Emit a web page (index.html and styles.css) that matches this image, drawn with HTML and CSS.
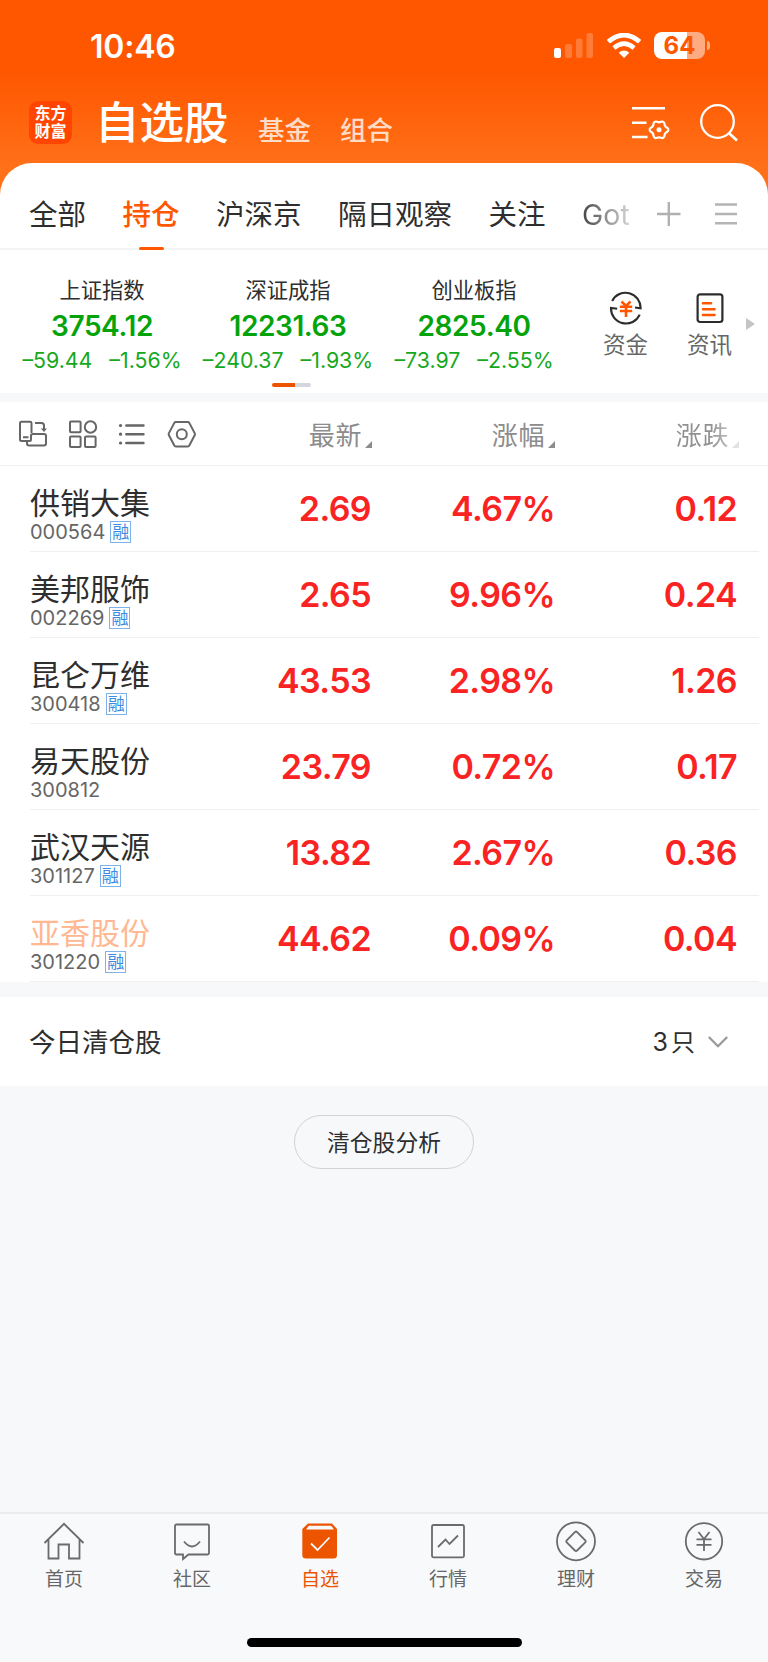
FILE: index.html
```html
<!DOCTYPE html>
<html lang="zh-CN">
<head>
<meta charset="utf-8">
<title>自选股</title>
<link rel="stylesheet" href="styles.css">
</head>
<body>
<div class="app">
  <header class="header">
    <div class="status">
      <span class="time">10:46</span>
      <div class="status-icons">
        <svg class="signal" width="40" height="26" viewBox="0 0 40 26" fill="#fff"><rect x="0" y="15" width="7" height="10" rx="2"/><g opacity=".22"><rect x="11" y="11" width="7" height="14" rx="2"/><rect x="22" y="5.500" width="6.500" height="19.500" rx="2"/><rect x="32.500" y="0" width="6.500" height="25" rx="2"/></g></svg>
        <svg class="wifi" width="34" height="26" viewBox="0 0 34 26" fill="none" stroke="#fff"><path d="M1.400 8.800Q17-4.600 32.600 8.800" stroke-width="4.800"/><path d="M6.900 14.900Q17 6.200 27.100 14.900" stroke-width="4.600"/><path d="M17 25L11.700 19.700Q17 15.300 22.300 19.700Z" fill="#fff" stroke="none"/></svg>
        <div class="battery"><span>64</span></div>
        <i class="battery-tip"></i>
      </div>
    </div>
    <div class="title-bar">
      <div class="logo"><span>东方</span><span>财富</span></div>
      <h1>自选股</h1>
      <span class="sub fund">基金</span>
      <span class="sub">组合</span>
      <svg class="ic-manage" width="40" height="36" viewBox="0 0 40 36" fill="none" stroke="#fff" stroke-width="2.600"><path d="M1 3.300H34M1 17.700H15.500M1 32H16.500"/><path d="M28 17.300C30 17.300 30.800 15.800 32.300 16.900C34.300 18.200 33 19.600 34.200 21.200C35.300 22.900 37.400 22.500 37.400 24.800C37.400 27.100 35.300 26.700 34.200 28.400C33 30 34.300 31.400 32.300 32.700C30.800 33.800 30 32.300 28 32.300C26 32.300 25.200 33.800 23.700 32.700C21.700 31.400 23 30 21.800 28.400C20.700 26.700 18.600 27.100 18.600 24.800C18.600 22.500 20.700 22.900 21.800 21.200C23 19.600 21.700 18.200 23.700 16.900C25.200 15.800 26 17.300 28 17.300Z" stroke-width="2.200" stroke-linejoin="round"/><circle cx="28" cy="24.800" r="2.500" fill="#fff" stroke="none"/></svg>
      <svg class="ic-search" width="40" height="40" viewBox="0 0 40 40" fill="none" stroke="#fff" stroke-width="2.300"><circle cx="18.500" cy="18.500" r="16.300"/><path d="M29.800 30L38 37.500" stroke-width="2.800"/></svg>
    </div>
  </header>

  <main class="sheet">
    <nav class="tabs">
      <span>全部</span><span class="on">持仓</span><span>沪深京</span><span>隔日观察</span><span>关注</span><span class="fade">Got</span>
      <svg class="ic-plus" width="24" height="24" viewBox="0 0 24 24" stroke="#b0b0b0" stroke-width="2.400"><path d="M0 12H23.500M11.800 0V24"/></svg>
      <svg class="ic-menu" width="22" height="24" viewBox="0 0 22 24" stroke="#b4b4b4" stroke-width="2.600"><path d="M0 2.500H22M0 12H22M0 21.300H22"/></svg>
    </nav>

    <section class="market">
      <div class="index"><h3>上证指数</h3><b>3754.12</b><p><span>–59.44</span><span>–1.56%</span></p></div>
      <div class="index"><h3>深证成指</h3><b>12231.63</b><p><span>–240.37</span><span>–1.93%</span></p><i class="pager"></i></div>
      <div class="index"><h3>创业板指</h3><b>2825.40</b><p><span>–73.97</span><span>–2.55%</span></p></div>
      <div class="link">
        <svg width="34" height="34" viewBox="0 0 34 34" fill="none" stroke="#2c2c2c" stroke-width="2.100"><path d="M3.200 10A15 15 0 0 1 31.600 17.300L26 16.500"/><path d="M30.700 23.600A15 15 0 0 1 2 16.900L8.200 17.700"/><path d="M12.500 10.500L17 15L21.500 10.500M10.800 15.800H23.200M10.800 20H23.200M17 15V26" stroke="#ff5600" stroke-width="2.600"/></svg>
        <span>资金</span>
      </div>
      <div class="link">
        <svg width="34" height="34" viewBox="0 0 34 34" fill="none" stroke="#2c2c2c" stroke-width="2.200"><rect x="4.600" y="3.400" width="24.800" height="27.600" rx="2.500"/><path d="M10 12.200H18M10 18.200H21.500M10 24H21.500" stroke="#ff5600" stroke-width="2.600" stroke-linecap="round"/></svg>
        <span>资讯</span>
      </div>
      <i class="more"></i>
    </section>

    <div class="columns">
      <div class="tools">
        <svg width="30" height="28" viewBox="0 0 30 28" fill="none" stroke="#666" stroke-width="2"><path d="M13.500 13V3Q13.500 1.800 12 1.800H3.500Q2 1.800 2 3.500V19.500Q2 21 3.500 21H11.500Q13 21 13 19.500V15.800Q13 14 15 14H26Q28 14 28 16V23.500Q28 25.500 26 25.500H11Q9 25.500 9 23.500V21M5 17.200H10.500M17 3H23.500Q26 3 26 5.500V10"/><path d="M22.800 8.500H29L26 12Z" fill="#666" stroke="none"/></svg>
        <svg width="30" height="28" viewBox="0 0 30 28" fill="none" stroke="#666" stroke-width="2"><rect x="2" y="1.600" width="10.600" height="10.600" rx="1"/><circle cx="22.500" cy="7" r="5.700"/><rect x="2" y="16.400" width="10.600" height="10.600" rx="1"/><rect x="17" y="16.400" width="10.600" height="10.600" rx="1"/></svg>
        <svg width="30" height="28" viewBox="0 0 30 28" fill="none" stroke="#666" stroke-width="2.400" stroke-linecap="round"><path d="M9.300 5.500H26.500M9.300 14.200H26.500M9.300 23H26.500"/><path d="M3.500 5.500h.1M3.500 14.200h.1M3.500 23h.1" stroke-width="3.200"/></svg>
        <svg width="30" height="28" viewBox="0 0 30 28" fill="none" stroke="#666" stroke-width="2" stroke-linejoin="round"><path d="M8.800 2H20.800Q21.800 2 22.300 2.900L27.800 13.400Q28.100 14.200 27.800 15L22.300 25.500Q21.800 26.400 20.800 26.400H8.800Q7.800 26.400 7.300 25.500L1.800 15Q1.500 14.200 1.800 13.400L7.300 2.900Q7.800 2 8.800 2Z"/><circle cx="14.800" cy="14.200" r="5"/></svg>
      </div>
      <span class="col">最新</span><span class="col">涨幅</span><span class="col dim">涨跌</span>
    </div>

    <section class="stocks">
      <div class="stock"><div class="name"><h4>供销大集</h4><p>000564<em>融</em></p></div><b>2.69</b><b>4.67%</b><b>0.12</b></div>
      <div class="stock"><div class="name"><h4>美邦服饰</h4><p>002269<em>融</em></p></div><b>2.65</b><b>9.96%</b><b>0.24</b></div>
      <div class="stock"><div class="name"><h4>昆仑万维</h4><p>300418<em>融</em></p></div><b>43.53</b><b>2.98%</b><b>1.26</b></div>
      <div class="stock"><div class="name"><h4>易天股份</h4><p>300812</p></div><b>23.79</b><b>0.72%</b><b>0.17</b></div>
      <div class="stock"><div class="name"><h4>武汉天源</h4><p>301127<em>融</em></p></div><b>13.82</b><b>2.67%</b><b>0.36</b></div>
      <div class="stock"><div class="name"><h4 class="faded">亚香股份</h4><p>301220<em>融</em></p></div><b>44.62</b><b>0.09%</b><b>0.04</b></div>
    </section>

    <section class="cleared">
      <span>今日清仓股</span>
      <span class="count"><i>3</i>只</span>
      <svg width="20" height="12" viewBox="0 0 20 12" fill="none" stroke="#999" stroke-width="2.300"><path d="M.8 1L10 10.200L19.200 1"/></svg>
    </section>
  </main>

  <div class="rest"><button class="analyse">清仓股分析</button></div>

  <nav class="tabbar">
    <div class="tab"><svg width="42" height="42" viewBox="0 0 42 42"><path d="M1.500 22L21 2.800L40.500 22M5.500 18.500V37.500H15.500V23.500H26V37.500H36.500V18.500"/></svg><span>首页</span></div>
    <div class="tab"><svg width="42" height="42" viewBox="0 0 42 42"><path d="M5.500 3.500H36.500Q38 3.500 38 5V32Q38 33.500 36.500 33.500H17.500L12 38V33.500H5.500Q4 33.500 4 32V5Q4 3.500 5.500 3.500Z"/><path d="M13 20.500Q21 30.500 29 20.500"/></svg><span>社区</span></div>
    <div class="tab on"><svg width="42" height="42" viewBox="0 0 42 42"><path d="M9 2.500H33L38 8V34Q38 37.500 34.500 37.500H7Q3.300 37.500 3.300 34V8Z" fill="#ec5400" stroke="none"/><path d="M9.800 4.800H32.200L35 8.500H7Z" fill="#f8f9fb" stroke="none"/><path d="M12 22.500L18.500 29L30.500 16.500" stroke="#f8f9fb"/></svg><span>自选</span></div>
    <div class="tab"><svg width="42" height="42" viewBox="0 0 42 42"><rect x="5" y="4" width="32" height="32.300" rx="1.500"/><path d="M11 26L18.500 18.500L22.500 23L31 14.500"/></svg><span>行情</span></div>
    <div class="tab"><svg width="42" height="42" viewBox="0 0 42 42"><circle cx="21" cy="20.300" r="19"/><path d="M19.900 11.100Q21 10 22.100 11.100L30.300 19.300Q31.300 20.300 30.300 21.300L22.100 29.500Q21 30.500 19.900 29.500L11.700 21.300Q10.700 20.300 11.700 19.300Z"/></svg><span>理财</span></div>
    <div class="tab"><svg width="42" height="42" viewBox="0 0 42 42"><circle cx="21" cy="20.300" r="18.200"/><path d="M15.500 11L21 18L26.500 11M13.500 18.300H28.500M13.500 23.800H28.500M21 18V30"/></svg><span>交易</span></div>
    <i class="home-bar"></i>
  </nav>
</div>
</body>
</html>
```
FILE: styles.css
```css
* { box-sizing: border-box; }
body { margin: 0; font-family: "Noto Sans CJK SC", sans-serif; color: #2e2e2e; }
h1, h3, h4, p { margin: 0; font-weight: 400; }
i, em { font-style: normal; }
svg { display: block; flex: none; }

.app {
  width: 768px; height: 1662px; overflow: hidden;
  display: flex; flex-direction: column;
  background: linear-gradient(#ff5600 0, #ff5600 70px, #ff7018 165px, #ff7018 220px, #f7f8fa 220px);
}
.header { height: 163px; flex: none; }
.status { height: 92px; padding: 0 58px 0 90px; display: flex; justify-content: space-between; align-items: center; color: #fff; }
.time { font: 600 32px/40px Inter, sans-serif; margin-top: 2px; letter-spacing: -.2px; }
.status-icons { display: flex; align-items: center; }
.wifi { margin: 0 13px 0 13px; }
.battery {
  width: 51px; height: 27px; border-radius: 8px;
  background: linear-gradient(90deg, #fff 33px, #ffab81 33px);
  font: 700 24px/27px Inter, sans-serif; color: #ff5600; text-align: center;
}
.battery, .battery-tip { margin-bottom: 1px; }
.battery-tip { width: 3px; height: 9px; margin-left: 2px; border-radius: 0 4px 4px 0; background: #ffab81; }

.title-bar { display: flex; height: 71px; padding-left: 29px; align-items: flex-start; color: #fff; }
.logo {
  width: 43px; height: 43px; margin: 9px 23px 0 0; padding-top: 2px; border-radius: 9px; background: #ff4500;
  display: flex; flex-direction: column; align-items: center;
  font: 700 16px/18px "Noto Sans CJK SC", sans-serif;
}
.title-bar h1 { width: 163px; font-size: 44.500px; font-weight: 500; line-height: 60px; margin-top: -2px; white-space: nowrap; }
.sub { font-size: 26.500px; font-weight: 500; line-height: 40px; margin-top: 17px; color: #ffdcc8; }
.fund { margin-right: 29px; }
.ic-manage { margin: 13px 28px 0 auto; }
.ic-search { margin: 11px 29px 0 0; }

.sheet { flex: none; background: #fff; border-radius: 32px 32px 0 0; }
.tabs {
  height: 87px; padding: 0 32px 0 29px; border-bottom: 2px solid #f4f4f4;
  display: flex; gap: 36.500px; font-size: 28.500px; line-height: 100px; position: relative; white-space: nowrap;
}
.tabs span { flex: none; }
.tabs .on { color: #ff5600; font-weight: 500; position: relative; }
.tabs .on::after { content: ""; position: absolute; left: 16px; top: 84px; width: 25px; height: 3px; border-radius: 2px; background: #ff5600; }
.tabs .fade {
  font-family: Inter, sans-serif; line-height: 104px; width: 50px;
  background: linear-gradient(90deg, #444, #ddd); -webkit-background-clip: text; background-clip: text; color: transparent;
}
.ic-plus { margin: 39px 0 0 -12px; }
.ic-menu { margin: 39px 0 0 -2.500px; }

.market { height: 143px; display: flex; padding-left: 9px; }
.index { width: 186px; flex: none; display: flex; flex-direction: column; align-items: center; padding-top: 23px; position: relative; }
.index h3 { font-size: 21.300px; line-height: 32px; }
.index b { font: 600 28px/38px Inter, sans-serif; letter-spacing: -.4px; margin-top: 2px; color: #05a30a; }
.index p { display: flex; gap: 17px; margin-top: -1px; font: 400 21.300px/32px Inter, sans-serif; color: #16a81c; white-space: nowrap; }
.pager { position: absolute; left: 77px; top: 133px; width: 39px; height: 4px; border-radius: 2px; background: linear-gradient(90deg, #ec5400 23px, #d3d6dc 23px); }
.link { width: 84px; flex: none; padding-top: 41px; display: flex; flex-direction: column; align-items: center; font-size: 22.500px; line-height: 36px; color: #666; }
.index + .link { margin-left: 16.500px; }
.more { align-self: flex-start; margin-top: 68px; margin-left: -6px; border: 6px solid transparent; border-left: 9px solid #c4c4c4; border-right: 0; }

.columns { height: 73px; border-top: 9px solid #f6f8fa; border-bottom: 1px solid #f0f0f0; display: grid; grid-template-columns: 189px 183px 183px 184px; color: #8c8c8c; }
.tools { display: flex; gap: 19.500px; padding: 18px 0 0 18px; }
.col { font-size: 26px; line-height: 63px; text-align: right; letter-spacing: .6px; display: flex; justify-content: flex-end; align-items: flex-start; }
.col::after { content: ""; align-self: flex-end; margin: 0 0 17px 3px; border-left: 7px solid transparent; border-bottom: 7px solid #8c8c8c; }
.dim { background: linear-gradient(90deg, #909090 155px, #ccc 180px); -webkit-background-clip: text; background-clip: text; color: transparent; }
.dim::after { border-bottom-color: #e2e2e2; }

.stock { height: 86px; display: grid; grid-template-columns: 158px 183px 184px 182px; margin: 0 9px 0 30px; border-bottom: 1px solid #f0f0f0; }
.name { width: 157px; }
.stock h4 { font-size: 30px; line-height: 44px; margin-top: 13px; white-space: nowrap; }
.stock h4.faded { color: #ffb892; }
.stock p { display: flex; align-items: center; height: 22px; margin: -2px 0 0 0; font: 400 20px/22px Inter, sans-serif; color: #666; }
.stock em { width: 21px; height: 22px; margin-left: 5px; border: 1px solid #7fb1ea; font: 400 17px/18px "Noto Sans CJK SC", sans-serif; color: #3c8be0; text-align: center; }
.stock b { font: 600 34px/86px Inter, sans-serif; letter-spacing: -.6px; color: #fa2323; text-align: right; white-space: nowrap; }

.cleared { height: 104px; border-top: 15px solid #f6f8fa; padding: 0 40px 2px 29px; display: flex; align-items: center; font-size: 26.500px; line-height: 40px; }
.cleared svg { margin-top: 2px; }
.count { margin: 0 13px 0 auto; font-size: 24px; }
.count i { font: 400 25px Inter, sans-serif; margin-right: 3px; }

.rest { flex: 1; background: #f6f8fa; display: flex; justify-content: center; align-items: flex-start; padding-top: 29px; }
.analyse { width: 180px; height: 54px; padding: 0 0 2px; border: 1px solid #d0d2d5; border-radius: 27px; background: transparent; font: 400 22.800px "Noto Sans CJK SC", sans-serif; color: #2e2e2e; }

.tabbar { flex: none; height: 150px; border-top: 2px solid #ebecee; background: #f8f9fb; display: flex; position: relative; }
.tab { width: 128px; padding-top: 7px; display: flex; flex-direction: column; align-items: center; font-size: 19px; line-height: 30px; color: #666; }
.tab svg { fill: none; stroke: #6b6b6b; stroke-width: 1.800; }
.tab.on { color: #ec5400; }
.home-bar { position: absolute; left: 247px; bottom: 15px; width: 275px; height: 9px; border-radius: 5px; background: #000; }
```
